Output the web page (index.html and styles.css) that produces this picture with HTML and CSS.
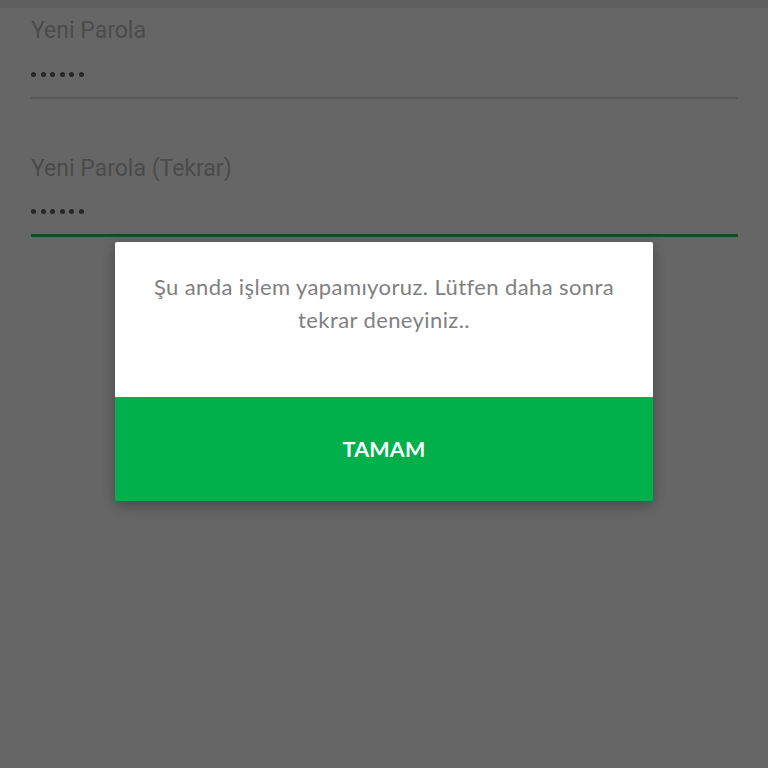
FILE: index.html
```html
<!DOCTYPE html>
<html lang="tr">
<head>
<meta charset="utf-8">
<link rel="stylesheet" href="styles.css">
</head>
<body>
<div class="statusbar"></div>
<div class="form">
  <div class="field">
    <div class="label">Yeni Parola</div>
    <div class="value"><span></span><span></span><span></span><span></span><span></span><span></span></div>
    <div class="line"></div>
  </div>
  <div class="field field2">
    <div class="label">Yeni Parola (Tekrar)</div>
    <div class="value"><span></span><span></span><span></span><span></span><span></span><span></span></div>
    <div class="line active"></div>
  </div>
</div>
<div class="dialog">
  <div class="dialog-body">Şu anda işlem yapamıyoruz. Lütfen daha sonra<br>tekrar deneyiniz..</div>
  <div class="dialog-btn">TAMAM</div>
</div>
</body>
</html>
```
FILE: styles.css
```css
html, body {
  margin: 0;
  padding: 0;
  width: 768px;
  height: 768px;
  background: #666666;
  overflow: hidden;
  font-family: Roboto, "Liberation Sans", sans-serif;
}
.statusbar {
  height: 8px;
  background: #5f5f5f;
}
.form {
  padding: 0 30px 0 31px;
}
.field {
  display: flex;
  flex-direction: column;
}
.label {
  font-size: 23px;
  line-height: 30px;
  color: #4b4b4b;
  margin-top: 8px;
}
.value {
  display: flex;
  gap: 4.6px;
  height: 6px;
  margin-top: 26px;
}
.value span {
  width: 5px;
  height: 5px;
  border-radius: 50%;
  background: #272727;
}
.line {
  height: 2px;
  background: #575757;
  margin-top: 19px;
}
.line.active {
  height: 3px;
  background: #1b4a25;
  margin-top: 19px;
}
.field2 {
  margin-top: 47px;
}
.field2 .label {
  margin-top: 8px;
}
.field2 .value {
  margin-top: 25px;
}
.dialog {
  position: absolute;
  left: 115px;
  top: 242px;
  width: 538px;
  height: 259px;
  border-radius: 2px;
  overflow: hidden;
  box-shadow: 0 4px 14px rgba(0,0,0,0.3);
  display: flex;
  flex-direction: column;
}
.dialog-body {
  background: #ffffff;
  height: 155px;
  box-sizing: border-box;
  padding-top: 28px;
  text-align: center;
  font-family: Lato, "Open Sans", sans-serif;
  font-size: 22px;
  line-height: 33px;
  color: #808080;
  letter-spacing: 0.4px;
}
.dialog-btn {
  flex: 1;
  background: #00b04b;
  color: #ffffff;
  font-family: Lato, "Open Sans", sans-serif;
  font-weight: 700;
  font-size: 21.5px;
  display: flex;
  align-items: center;
  justify-content: center;
  letter-spacing: 0.2px;
}
```
